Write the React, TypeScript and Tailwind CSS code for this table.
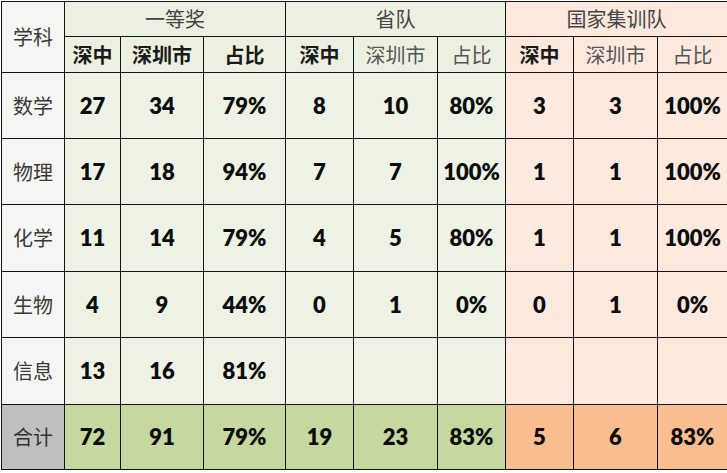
type Tone = "green" | "orange";

interface Row {
  subject: string;
  values: string[];
}

const rows: Row[] = [
  { subject: "数学", values: ["27", "34", "79%", "8", "10", "80%", "3", "3", "100%"] },
  { subject: "物理", values: ["17", "18", "94%", "7", "7", "100%", "1", "1", "100%"] },
  { subject: "化学", values: ["11", "14", "79%", "4", "5", "80%", "1", "1", "100%"] },
  { subject: "生物", values: ["4", "9", "44%", "0", "1", "0%", "0", "1", "0%"] },
  { subject: "信息", values: ["13", "16", "81%", "", "", "", "", "", ""] },
];

const total = ["72", "91", "79%", "19", "23", "83%", "5", "6", "83%"];

const cjk = "font-['Noto_Sans_CJK_SC',sans-serif]";
const num = "font-['Lato','Noto_Sans_CJK_SC',sans-serif] font-extrabold text-[22px] text-[#0d0d0d]";

const toneOf = (i: number): Tone => (i < 6 ? "green" : "orange");

function Cell({
  children,
  className = "",
}: {
  children?: React.ReactNode;
  className?: string;
}) {
  return (
    <div className={`flex items-center justify-center leading-none ${className}`}>
      {children}
    </div>
  );
}

export default function App() {
  const sub = [
    { label: "深中", bold: true },
    { label: "深圳市", bold: true },
    { label: "占比", bold: true },
    { label: "深中", bold: true },
    { label: "深圳市", bold: false },
    { label: "占比", bold: false },
    { label: "深中", bold: true },
    { label: "深圳市", bold: false },
    { label: "占比", bold: false },
  ];

  return (
    <div className="h-[473px] w-[727px] overflow-hidden bg-white pl-px pt-px">
      <div
        className={`grid grid-cols-[62px_55px_82px_81px_67px_83px_67px_67px_83px_1fr] grid-rows-[34px_35px_65px_65px_66px_65px_66px_64px] gap-px bg-[#141414] p-px pr-0 ${cjk}`}
      >
        {/* header */}
        <Cell className="row-span-2 bg-[#f5f5f3] text-[20px] text-[#3a3a3a]">学科</Cell>
        <Cell className="col-span-3 bg-[#ebf0e0] text-[20px] text-[#444]">一等奖</Cell>
        <Cell className="col-span-3 bg-[#ebf0e0] text-[20px] text-[#444]">省队</Cell>
        <Cell className="col-span-3 bg-[#fce8dc] text-[20px] text-[#444]">国家集训队</Cell>
        {sub.map((s, i) => (
          <Cell
            key={i}
            className={`text-[20px] ${toneOf(i) === "green" ? "bg-[#ebf0e0]" : "bg-[#fce8dc]"} ${
              s.bold ? "font-bold text-[#1a1a1a]" : "text-[#555]"
            }`}
          >
            {s.label}
          </Cell>
        ))}

        {/* body */}
        {rows.map((r) => (
          <div key={r.subject} className="contents">
            <Cell className="bg-[#f5f5f3] text-[20px] text-[#3a3a3a]">{r.subject}</Cell>
            {r.values.map((v, i) => (
              <Cell
                key={i}
                className={`${num} ${toneOf(i) === "green" ? "bg-[#eef2e4]" : "bg-[#fde9dd]"}`}
              >
                {v}
              </Cell>
            ))}
          </div>
        ))}

        {/* total */}
        <Cell className="bg-[#bfbfbf] text-[20px] text-[#333]">合计</Cell>
        {total.map((v, i) => (
          <Cell
            key={i}
            className={`${num} ${toneOf(i) === "green" ? "bg-[#c4d8a0]" : "bg-[#f9be90]"}`}
          >
            {v}
          </Cell>
        ))}
      </div>
    </div>
  );
}
